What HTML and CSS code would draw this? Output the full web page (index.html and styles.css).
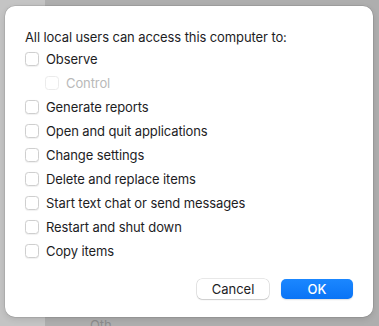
FILE: index.html
```html
<!DOCTYPE html>
<html lang="en">
<head>
    <meta charset="UTF-8">
    <title>Sharing Options</title>
    <link rel="stylesheet" href="styles.css">
</head>
<body>
    <div class="backdrop">
        <div class="sidebar"></div>
        <div class="pane">
            <p class="ghost">Oth</p>
        </div>
    </div>

    <!-- Access options sheet -->
    <div class="dialog">
        <p class="title">All local users can access this computer to:</p>
        <ul class="options">
            <li class="option"><span class="box"></span>Observe</li>
            <li class="option sub disabled"><span class="box"></span>Control</li>
            <li class="option"><span class="box"></span>Generate reports</li>
            <li class="option"><span class="box"></span>Open and quit applications</li>
            <li class="option"><span class="box"></span>Change settings</li>
            <li class="option"><span class="box"></span>Delete and replace items</li>
            <li class="option"><span class="box"></span>Start text chat or send messages</li>
            <li class="option"><span class="box"></span>Restart and shut down</li>
            <li class="option"><span class="box"></span>Copy items</li>
        </ul>
        <div class="actions">
            <button class="btn">Cancel</button>
            <button class="btn primary">OK</button>
        </div>
    </div>
</body>
</html>
```

FILE: styles.css
```css
body {
    margin: 0;
    width: 379px;
    height: 326px;
    overflow: hidden;
    position: relative;
    font-family: 'Inter', 'Liberation Sans', sans-serif;
    font-size: 13px;
    letter-spacing: -0.1px;
    color: #1d1d1f;
}
.backdrop {
    display: flex;
    height: 100%;
}
.sidebar {
    width: 45px;
    background-color: #c4c4c4;
}
.pane {
    flex: 1;
    background-color: #aeaeae;
    display: flex;
    align-items: flex-end;
}
.ghost {
    margin: 0 0 -6px 45px;
    line-height: 14px;
    color: #8c8c8c;
    font-size: 13px;
}
.dialog {
    position: absolute;
    top: 6px;
    left: 5px;
    width: 368px;
    height: 311px;
    box-sizing: border-box;
    padding: 23px 20px 18px 20px;
    background-color: #fff;
    border-radius: 10px;
    box-shadow: 0 0 0 0.5px rgba(0, 0, 0, 0.15), 0 2px 6px rgba(0, 0, 0, 0.12);
    display: flex;
    flex-direction: column;
}
.title {
    margin: 0;
    line-height: 16px;
}
.options {
    list-style: none;
    margin: 2px 0 0 0;
    padding: 0;
}
.option {
    display: flex;
    align-items: center;
    height: 24px;
}
.box {
    width: 14px;
    height: 14px;
    box-sizing: border-box;
    margin-right: 7px;
    border: 1px solid #cfcfcf;
    border-radius: 3.5px;
    background-color: #fff;
    box-shadow: 0 0.5px 1px rgba(0, 0, 0, 0.06);
}
.sub {
    padding-left: 20px;
}
.disabled {
    color: #b9b9b9;
}
.disabled .box {
    border-color: #ebebeb;
    box-shadow: none;
}
.actions {
    margin-top: auto;
    display: flex;
    justify-content: flex-end;
    gap: 12px;
}
.btn {
    width: 72px;
    height: 20px;
    padding: 0;
    font-family: inherit;
    font-size: 13px;
    color: #1d1d1f;
    background-color: #fff;
    border: none;
    border-radius: 5px;
    box-shadow: 0 0 0 0.5px rgba(0, 0, 0, 0.18), 0 1px 1.5px rgba(0, 0, 0, 0.12);
}
.primary {
    color: #fff;
    font-weight: 500;
    background: linear-gradient(#1b87ff, #0a74f5);
    box-shadow: 0 1px 1.5px rgba(0, 0, 0, 0.12);
}
```
